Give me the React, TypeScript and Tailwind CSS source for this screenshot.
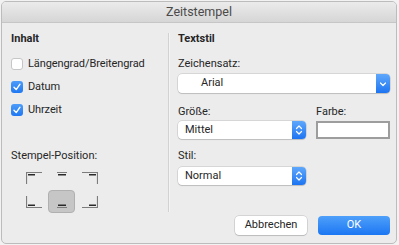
import React from 'react';

const font = { fontFamily: 'Roboto, "Liberation Sans", sans-serif' };

// Small white check used in the blue boxes
const Check = () => (
  <svg width="10" height="10" viewBox="0 0 10 10">
    <path d="M2 5.3 L4.2 7.6 L8 2.2" fill="none" stroke="white" strokeWidth="1.4" strokeLinecap="round" strokeLinejoin="round" />
  </svg>
);

const CheckRow = ({ label, checked }: { label: string; checked: boolean }) => (
  <div className="flex items-center h-[14px] gap-[5px]">
    {checked ? (
      <div className="w-[12px] h-[12px] rounded-[3px] bg-gradient-to-b from-[#4c9cf9] to-[#1f78f2] flex items-center justify-center">
        <Check />
      </div>
    ) : (
      <div className="w-[12px] h-[12px] rounded-[3px] bg-white border border-[#c6c6c6]" />
    )}
    <span className="text-[11px] tracking-[-0.1px] leading-[14px] text-[#262626]">{label}</span>
  </div>
);

const Chevrons = ({ double }: { double: boolean }) => (
  <svg width="8" height="12" viewBox="0 0 8 12">
    {double ? (
      <>
        <path d="M1.5 4.5 L4 2 L6.5 4.5" fill="none" stroke="white" strokeWidth="1.2" strokeLinecap="round" strokeLinejoin="round" />
        <path d="M1.5 7.5 L4 10 L6.5 7.5" fill="none" stroke="white" strokeWidth="1.2" strokeLinecap="round" strokeLinejoin="round" />
      </>
    ) : (
      <path d="M1.5 5 L4 7.5 L6.5 5" fill="none" stroke="white" strokeWidth="1.2" strokeLinecap="round" strokeLinejoin="round" />
    )}
  </svg>
);

const Select = ({ value, double, indent, h }: { value: string; double: boolean; indent: string; h: string }) => (
  <div className={`flex ${h} rounded-[4px] bg-white shadow-[0_0_0_0.5px_rgba(0,0,0,0.18),0_1px_1px_rgba(0,0,0,0.12)]`}>
    <div className={`flex-1 flex items-center ${indent} text-[11px] text-[#262626]`}>{value}</div>
    <div className="w-[14px] rounded-r-[4px] bg-gradient-to-b from-[#5ea7fb] to-[#1c74f1] flex items-center justify-center">
      <Chevrons double={double} />
    </div>
  </div>
);

// Stamp position glyphs: thin frame edge plus a dark bar
const PosIcon = ({ v, h }: { v: 'top' | 'bottom'; h: 'left' | 'center' | 'right' }) => {
  const w = h === 'center' ? 10 : 16;
  const edgeY = v === 'top' ? 0.5 : 11.5;
  const barY = v === 'top' ? 2.8 : 9.2;
  const sideX = h === 'left' ? 0.5 : w - 0.5;
  const barX1 = h === 'left' ? 2 : h === 'center' ? 1 : w - 9;
  const barX2 = h === 'left' ? 9 : h === 'center' ? 9 : w - 2;
  return (
    <svg width={w} height="12" viewBox={`0 0 ${w} 12`}>
      <line x1="0" y1={edgeY} x2={w} y2={edgeY} stroke="#7c7c7c" strokeWidth="1" />
      {h !== 'center' && <line x1={sideX} y1="0" x2={sideX} y2="12" stroke="#7c7c7c" strokeWidth="1.2" />}
      <line x1={barX1} y1={barY} x2={barX2} y2={barY} stroke="#2a2a2a" strokeWidth="1.6" />
    </svg>
  );
};

const label = 'text-[11px] leading-[14px] text-[#262626]';

export default function App() {
  return (
    <div className="w-[399px] h-[245px] bg-[#f2f2f2] pt-px pl-px" style={font}>
      <div className="w-[396px] h-[243px] rounded-[5px] border border-[#bcbcbc] bg-[#ececec] overflow-hidden flex flex-col">
        {/* title bar */}
        <div className="h-[21px] border-b border-[#c6c6c6] bg-gradient-to-b from-[#ebebeb] to-[#d6d6d6] flex items-center justify-center">
          <span className="text-[12.5px] text-[#4a4a4a]">Zeitstempel</span>
        </div>

        <div className="flex h-[189px]">
          {/* Inhalt */}
          <div className="w-[166px] pl-[9px] flex flex-col">
            <div className="mt-[9px] text-[11px] leading-[14px] font-bold text-[#262626]">Inhalt</div>
            <div className="mt-[11px] flex flex-col gap-[9px]">
              <CheckRow label="Längengrad/Breitengrad" checked={false} />
              <CheckRow label="Datum" checked />
              <CheckRow label="Uhrzeit" checked />
            </div>
            <div className={`mt-[32px] ${label}`}>Stempel-Position:</div>
            <div className="mt-[3px] ml-[9px] grid grid-cols-[27px_27px_27px] grid-rows-[23px_23px] gap-[1px]">
              <div className="flex items-center justify-center"><PosIcon v="top" h="left" /></div>
              <div className="flex items-center justify-center"><PosIcon v="top" h="center" /></div>
              <div className="flex items-center justify-center"><PosIcon v="top" h="right" /></div>
              <div className="flex items-center justify-center"><PosIcon v="bottom" h="left" /></div>
              <div className="flex items-center justify-center rounded-[4px] bg-[#c6c6c6] border border-[#b0b0b0]"><PosIcon v="bottom" h="center" /></div>
              <div className="flex items-center justify-center"><PosIcon v="bottom" h="right" /></div>
            </div>
          </div>

          <div className="mt-[10px] w-px bg-[#d2d2d2] border-r border-[#f4f4f4] box-content" />

          {/* Textstil */}
          <div className="flex-1 pl-[8px] pr-[6px] flex flex-col">
            <div className="mt-[9px] text-[11px] leading-[14px] font-bold text-[#262626]">Textstil</div>
            <div className={`mt-[11px] ${label}`}>Zeichensatz:</div>
            <div className="mt-[3px]">
              <Select value="Arial" double={false} indent="pl-[23px]" h="h-[19px]" />
            </div>
            <div className="mt-[12px] flex gap-[10px]">
              <div className="w-[128px] flex flex-col">
                <div className={label}>Größe:</div>
                <div className="mt-[2px]">
                  <Select value="Mittel" double indent="pl-[7px]" h="h-[18px]" />
                </div>
                <div className={`mt-[10px] ${label}`}>Stil:</div>
                <div className="mt-[4px]">
                  <Select value="Normal" double indent="pl-[7px]" h="h-[18px]" />
                </div>
              </div>
              <div className="flex-1 flex flex-col">
                <div className={label}>Farbe:</div>
                <div className="mt-[2px] h-[18px] bg-white border-[2px] border-[#9d9d9d]" />
              </div>
            </div>
          </div>
        </div>

        {/* footer buttons */}
        <div className="flex justify-end gap-[11px] pt-[4px] pr-[6px]">
          <div className="w-[72px] h-[19px] rounded-[4px] bg-white shadow-[0_0_0_0.5px_rgba(0,0,0,0.2),0_1px_1px_rgba(0,0,0,0.12)] flex items-center justify-center text-[11px] text-[#262626]">
            Abbrechen
          </div>
          <div className="w-[72px] h-[19px] rounded-[4px] bg-gradient-to-b from-[#4ea0fa] to-[#1a76f2] flex items-center justify-center text-[11px] text-white">
            OK
          </div>
        </div>
      </div>
    </div>
  );
}
